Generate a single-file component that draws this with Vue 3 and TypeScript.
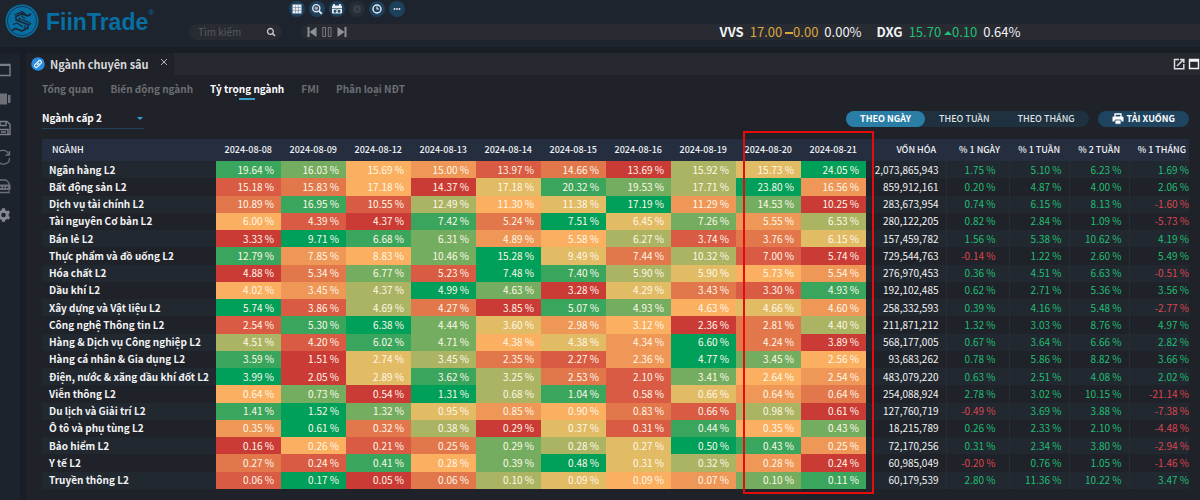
<script setup lang="ts">
import { ref } from 'vue'

interface Row {
  name: string
  weights: number[]
  cap: string
  changes: number[]
}

const dates = [
  '2024-08-08', '2024-08-09', '2024-08-12', '2024-08-13', '2024-08-14',
  '2024-08-15', '2024-08-16', '2024-08-19', '2024-08-20', '2024-08-21',
]

const rows: Row[] = [
  { name: 'Ngân hàng L2', weights: [19.64, 16.03, 15.69, 15.0, 13.97, 14.66, 13.69, 15.92, 15.73, 24.05], cap: '2,073,865,943', changes: [1.75, 5.1, 6.23, 1.69] },
  { name: 'Bất động sản L2', weights: [15.18, 15.83, 17.18, 14.37, 17.18, 20.32, 19.53, 17.71, 23.8, 16.56], cap: '859,912,161', changes: [0.2, 4.87, 4.0, 2.06] },
  { name: 'Dịch vụ tài chính L2', weights: [10.89, 16.95, 10.55, 12.49, 11.3, 11.38, 17.19, 11.29, 14.53, 10.25], cap: '283,673,954', changes: [0.74, 6.15, 8.13, -1.6] },
  { name: 'Tài nguyên Cơ bản L2', weights: [6.0, 4.39, 4.37, 7.42, 5.24, 7.51, 6.45, 7.26, 5.55, 6.53], cap: '280,122,205', changes: [0.82, 2.84, 1.09, -5.73] },
  { name: 'Bán lẻ L2', weights: [3.33, 9.71, 6.68, 6.31, 4.89, 5.58, 6.27, 3.74, 3.76, 6.15], cap: '157,459,782', changes: [1.56, 5.38, 10.62, 4.19] },
  { name: 'Thực phẩm và đồ uống L2', weights: [12.79, 7.85, 8.83, 10.46, 15.28, 9.49, 7.44, 10.32, 7.0, 5.74], cap: '729,544,763', changes: [-0.14, 1.22, 2.6, 5.49] },
  { name: 'Hóa chất L2', weights: [4.88, 5.34, 6.77, 5.23, 7.48, 7.4, 5.901, 5.9, 5.73, 5.54], cap: '276,970,453', changes: [0.36, 4.51, 6.63, -0.51] },
  { name: 'Dầu khí L2', weights: [4.02, 3.45, 4.37, 4.99, 4.63, 3.28, 4.29, 3.43, 3.3, 4.93], cap: '192,102,485', changes: [0.62, 2.71, 5.36, 3.56] },
  { name: 'Xây dựng và Vật liệu L2', weights: [5.74, 3.86, 4.69, 4.27, 3.85, 5.07, 4.93, 4.63, 4.66, 4.6], cap: '258,332,593', changes: [0.39, 4.16, 5.48, -2.77] },
  { name: 'Công nghệ Thông tin L2', weights: [2.54, 5.3, 6.38, 4.44, 3.6, 2.98, 3.12, 2.36, 2.81, 4.4], cap: '211,871,212', changes: [1.32, 3.03, 8.76, 4.97] },
  { name: 'Hàng & Dịch vụ Công nghiệp L2', weights: [4.51, 4.2, 6.02, 4.71, 4.38, 4.38, 4.34, 6.6, 4.24, 3.89], cap: '568,177,005', changes: [0.67, 3.64, 6.66, 2.82] },
  { name: 'Hàng cá nhân & Gia dụng L2', weights: [3.59, 1.51, 2.74, 3.45, 2.35, 2.27, 2.36, 4.77, 3.45, 2.56], cap: '93,683,262', changes: [0.78, 5.86, 8.82, 3.66] },
  { name: 'Điện, nước & xăng dầu khí đốt L2', weights: [3.99, 2.05, 2.89, 3.62, 3.25, 2.53, 2.1, 3.41, 2.64, 2.54], cap: '483,079,220', changes: [0.63, 2.51, 4.08, 2.02] },
  { name: 'Viễn thông L2', weights: [0.642, 0.73, 0.54, 1.31, 0.68, 1.04, 0.58, 0.66, 0.641, 0.64], cap: '254,088,924', changes: [2.78, 3.02, 10.15, -21.14] },
  { name: 'Du lịch và Giải trí L2', weights: [1.41, 1.52, 1.32, 0.95, 0.85, 0.9, 0.83, 0.66, 0.98, 0.61], cap: '127,760,719', changes: [-0.49, 3.69, 3.88, -7.38] },
  { name: 'Ô tô và phụ tùng L2', weights: [0.35, 0.61, 0.32, 0.38, 0.29, 0.37, 0.31, 0.44, 0.35, 0.43], cap: '18,215,789', changes: [0.26, 2.33, 2.1, -4.48] },
  { name: 'Bảo hiểm L2', weights: [0.16, 0.26, 0.21, 0.25, 0.29, 0.28, 0.27, 0.5, 0.43, 0.25], cap: '72,170,256', changes: [0.31, 2.34, 3.8, -2.94] },
  { name: 'Y tế L2', weights: [0.27, 0.241, 0.41, 0.281, 0.39, 0.48, 0.31, 0.32, 0.28, 0.24], cap: '60,985,049', changes: [-0.2, 0.76, 1.05, -1.46] },
  { name: 'Truyền thông L2', weights: [0.06, 0.17, 0.05, 0.06, 0.1, 0.091, 0.09, 0.07, 0.1, 0.11], cap: '60,179,539', changes: [2.8, 11.36, 10.22, 3.47] },
]

// Position of a value among its row, 0 (lowest) to 9 (highest); equal values keep date order.
function rank(weights: number[], index: number): number {
  const value = weights[index]
  return weights.filter((w, i) => w < value || (w === value && i < index)).length
}

const percent = (value: number): string => `${value.toFixed(2)} %`

const changeHeads = ['% 1 NGÀY', '% 1 TUẦN', '% 2 TUẦN', '% 1 THÁNG']
const tabs = ['Tổng quan', 'Biến động ngành', 'Tỷ trọng ngành', 'FMI', 'Phân loại NĐT']
const activeTab = ref('Tỷ trọng ngành')
const periods = ['THEO NGÀY', 'THEO TUẦN', 'THEO THÁNG']
const activePeriod = ref('THEO NGÀY')
const level = ref('2')
const query = ref('')
</script>

<template>
  <div class="app">
    <header class="top">
      <a class="brand" href="#" aria-label="FiinTrade">
        <svg class="mark" viewBox="0 0 34 34" aria-hidden="true">
          <circle cx="17" cy="17" r="16.5" fill="#086fa3" />
          <circle cx="17" cy="17" r="14.6" fill="none" stroke="#1b2c3d" stroke-width="0.8" />
          <g fill="none" stroke="#1b2531" stroke-linejoin="round">
            <path d="M26 10 22.500 12 17 9.500 11 12.500V16L23 20.500V24L17 27 10.500 24.500 7 26.500" stroke-width="1.500" />
            <path d="M22.500 12 17 7.500 9.500 11M14 13.500V17M14 14.500 24.500 18.500M20 21V25M8 20.500 12 19 18 23M17 9.500V12.500L20 14.500M24 21 26 19" stroke-width="1.100" />
          </g>
        </svg>
        <span class="wordmark">FiinTrade</span><span class="reg">®</span>
      </a>

      <div class="tools">
        <nav class="round-buttons" aria-label="Công cụ">
          <button type="button" aria-label="Bảng">
            <svg viewBox="0 0 16 16"><path d="M3.500 3.500h9v9h-9z" fill="#e9edf2" /><path d="M3.500 6.500h9M3.500 9.500h9M6.500 4.500v8M9.500 4.500v8" stroke="#6f859c" stroke-width=".6" /></svg>
          </button>
          <button type="button" aria-label="Tra cứu">
            <svg viewBox="0 0 16 16" fill="none" stroke="#e9edf2"><circle cx="7.300" cy="7.300" r="3.600" stroke-width="1.300" /><path d="m10 10 2.800 2.800" stroke-width="1.800" /><path d="M5.500 6.300h3.500M5.500 7.700h3.500M6.500 9h2" stroke-width=".8" /></svg>
          </button>
          <button type="button" aria-label="Lịch">
            <svg viewBox="0 0 16 16"><path d="M5 3v2M11 3v2" stroke="#e9edf2" stroke-width="1.800" /><rect x="3" y="4.500" width="10" height="8" rx="1" fill="#e9edf2" /><path d="M3 7.500h10M8 8v1M5 9.200h2v2H5zM9 9.200h2v2H9z" stroke="#254a67" stroke-width=".7" fill="#254a67" /></svg>
          </button>
          <button type="button" class="dim" aria-label="Thông báo">
            <svg viewBox="0 0 16 16"><circle cx="8" cy="8" r="4" fill="#3a4048" /><circle cx="8" cy="8" r="1.500" fill="#2b3139" /></svg>
          </button>
          <button type="button" aria-label="Lịch sử">
            <svg viewBox="0 0 16 16" fill="none" stroke="#e9edf2" stroke-width="1.400"><circle cx="8" cy="8" r="4" /><path d="M8 5.500V8h2" stroke-width="1.100" /></svg>
          </button>
          <button type="button" aria-label="Thêm">
            <svg viewBox="0 0 16 16" fill="#e9edf2"><circle cx="5.500" cy="8" r=".9" /><circle cx="8" cy="8" r=".9" /><circle cx="10.500" cy="8" r=".9" /></svg>
          </button>
        </nav>

        <div class="strip">
          <label class="search">
            <input v-model="query" type="text" placeholder="Tìm kiếm" aria-label="Tìm kiếm" />
            <svg viewBox="0 0 10 10" fill="none" stroke="#c9ccd1" aria-hidden="true"><circle cx="4.400" cy="4.400" r="2.900" stroke-width="1.300" /><path d="m6.500 6.500 2.500 2.500" stroke-width="1.600" /></svg>
          </label>
          <div class="ticker">
            <div class="player">
              <button type="button" aria-label="Lùi"><svg viewBox="0 0 10 10"><path d="M1.500 0v10" stroke="#8e9197" stroke-width="2" /><path d="M9.500 0v10L2.500 5z" fill="#8e9197" /></svg></button>
              <button type="button" aria-label="Tạm dừng"><svg viewBox="0 0 10 10" fill="none" stroke="#777a80"><path d="M.8.5h2.700v9H.8zM6.300.5H9v9H6.300z" /></svg></button>
              <button type="button" aria-label="Tiến"><svg viewBox="0 0 10 10"><path d="M8.500 0v10" stroke="#8e9197" stroke-width="2" /><path d="M.5 0v10L7.500 5z" fill="#8e9197" /></svg></button>
            </div>
            <div class="quotes">
              <div class="quote">
                <strong>VVS</strong>
                <span class="flat">17.00 <i class="dash"></i>0.00</span>
                <span>0.00%</span>
              </div>
              <div class="quote">
                <strong>DXG</strong>
                <span class="up">15.70 <i class="tri"></i>0.10</span>
                <span>0.64%</span>
              </div>
            </div>
          </div>
        </div>
      </div>
    </header>

    <div class="body">
      <aside class="rail">
        <button type="button" aria-label="Cửa sổ"><svg viewBox="0 0 16 16" fill="none" stroke="#7b7f85"><path d="M1 2.500h14v11H1z" stroke-width="1.400" /><path d="M1 3h14" stroke-width="2" /></svg></button>
        <button type="button" aria-label="Bố cục"><svg viewBox="0 0 16 16" fill="#6d7177"><path d="M4.500 2.500h7.500v11H4.500zM1 4h2.500v8H1zM13 4h2.500v8H13z" /></svg></button>
        <button type="button" aria-label="Lưu"><svg viewBox="0 0 16 16" fill="none" stroke="#7b7f85" stroke-width="1.400"><path d="M1.500 1.500h10.500l3 3v10H1.500z" /><path d="M5 1.500v4h6v-4M4 14.500V9.500h9v5M6 12h5" /></svg></button>
        <button type="button" aria-label="Làm mới"><svg viewBox="0 0 16 16" fill="none" stroke="#6d7177" stroke-width="1.300"><path d="M2 7a6 6 0 0 1 11.500-2M14.500 9A6 6 0 0 1 3 11.500M14.500 2v4h-4M1.500 14v-3.500H5" /></svg></button>
        <button type="button" aria-label="Xuất dữ liệu"><svg viewBox="0 0 16 16" fill="none" stroke="#6d7177" stroke-width="1.300"><path d="M2.500 6V2h8.500l3 3v2M2.500 12.500V14.500h11.500v-2" /><path d="M1 6.500h14.500v5.500H1z" fill="#6d7177" stroke="none" /><path d="M5 9.300h1.500M8 9.300h1.500M11 9.300h2" stroke="#1d232c" /></svg></button>
        <button type="button" aria-label="Cài đặt"><svg viewBox="0 0 16 16"><circle cx="8.500" cy="8" r="3.800" fill="none" stroke="#85888e" stroke-width="3" /><path d="M8.500 1.300v2M8.500 12.700v2M2.700 4.600l1.700 1M12.600 10.400l1.700 1M2.700 11.400l1.700-1M12.600 5.600l1.700-1" stroke="#85888e" stroke-width="3.200" /></svg></button>
      </aside>

      <main class="panel">
        <div class="tabbar">
          <div class="window-tab">
            <svg class="link" viewBox="0 0 14 14" aria-hidden="true"><circle cx="7" cy="7" r="6.800" fill="#2a8be0" /><g fill="none" stroke="#fff" stroke-width="1.100" transform="rotate(-45 7 7)"><rect x="2.800" y="5.300" width="8.400" height="3.400" rx="1.700" /><path d="M5.500 7h3" /></g></svg>
            <span>Ngành chuyên sâu</span>
            <button type="button" class="close" aria-label="Đóng"><svg viewBox="0 0 8 8" stroke="#b5b8bd"><path d="m1 1 6 6M7 1 1 7" /></svg></button>
          </div>
          <div class="window-actions">
            <button type="button" aria-label="Mở rộng"><svg viewBox="0 0 12 12" fill="none" stroke="#dadcdf" stroke-width="1.500"><path d="M6 1.500H1.500v9.300h9.300V6" /><path d="M4 8 10 2M7 1.500h3.800V5" /></svg></button>
            <button type="button" aria-label="Phóng to"><svg viewBox="0 0 12 12" fill="none" stroke="#f1f2f3"><path d="M1.500 1.500h9v9h-9z" stroke-width="1.400" /><path d="M1 2.500h10" stroke-width="2.500" /></svg></button>
          </div>
        </div>

        <section class="content">
          <nav class="tabs">
            <a v-for="t in tabs" :key="t" href="#" :class="{ active: t === activeTab }" @click.prevent="activeTab = t">{{ t }}</a>
          </nav>

          <div class="filters">
            <div class="level">
              <select v-model="level" aria-label="Ngành cấp">
                <option value="1">Ngành cấp 1</option>
                <option value="2">Ngành cấp 2</option>
                <option value="3">Ngành cấp 3</option>
              </select>
            </div>
            <div class="actions">
              <div class="periods" role="group" aria-label="Kỳ">
                <button v-for="p in periods" :key="p" type="button" :class="{ active: p === activePeriod }" @click="activePeriod = p">{{ p }}</button>
              </div>
              <button type="button" class="download">
                <svg viewBox="0 0 12 12" aria-hidden="true"><path d="M3 4V1h6v3" fill="none" stroke="#fff" stroke-width="1.300" /><path d="M.5 4.500q0-1 1-1h9q1 0 1 1v4H.5z" fill="#fff" /><path d="M3 7h6v4.200H3z" fill="#fff" stroke="#1f4460" stroke-width=".8" /></svg>
                TẢI XUỐNG
              </button>
            </div>
          </div>

          <div class="table-wrap">
            <table>
              <colgroup>
                <col class="c-name" />
                <col v-for="d in dates" :key="d" class="c-date" />
                <col class="c-cap" />
                <col class="c-day" />
                <col class="c-change" />
                <col class="c-change" />
                <col class="c-change" />
              </colgroup>
              <thead>
                <tr>
                  <th class="name">NGÀNH</th>
                  <th v-for="d in dates" :key="d" class="date">{{ d }}</th>
                  <th class="cap">VỐN HÓA</th>
                  <th v-for="h in changeHeads" :key="h" class="change">{{ h }}</th>
                </tr>
              </thead>
              <tbody>
                <tr v-for="r in rows" :key="r.name">
                  <th scope="row" class="name">{{ r.name }}</th>
                  <td v-for="(w, i) in r.weights" :key="i" :class="['weight', `heat-${rank(r.weights, i)}`]">{{ percent(w) }}</td>
                  <td class="cap">{{ r.cap }}</td>
                  <td v-for="(c, i) in r.changes" :key="i" :class="['change', c < 0 ? 'down' : 'up', { day: i === 0 }]">{{ percent(c) }}</td>
                </tr>
              </tbody>
            </table>
            <div class="highlight"></div>
          </div>
        </section>
      </main>
    </div>
  </div>
</template>

<style>
body {
  margin: 0;
  background: #1f2228;
}
</style>

<style scoped>
.app {
  display: flex;
  flex-direction: column;
  min-height: 100vh;
  overflow: hidden;
  background: #191d25;
  color: #f2f3f5;
  font-family: "Noto Sans CJK SC", "Noto Sans", sans-serif;
  font-size: 10px;
  line-height: 16px;
}
button {
  display: flex;
  align-items: center;
  justify-content: center;
  padding: 0;
  border: 0;
  background: none;
  color: inherit;
  font: inherit;
  cursor: pointer;
}
a {
  color: inherit;
  text-decoration: none;
}
svg {
  display: block;
  flex: none;
}

/* top bar */
.top {
  display: flex;
  height: 47px;
  background: #1e242d;
}
.brand {
  display: flex;
  width: 184px;
  padding: 4px 0 0 5px;
  box-sizing: border-box;
  color: #086fa3;
  font-family: "Liberation Sans", Arial, sans-serif;
}
.mark {
  width: 34px;
  height: 34px;
  margin-right: 7px;
}
.wordmark {
  font-size: 23px;
  font-weight: 700;
  line-height: 36px;
}
.reg {
  font-size: 8px;
  line-height: 18px;
}
.tools {
  display: flex;
  flex: 1;
  flex-direction: column;
  gap: 7px;
}
.round-buttons {
  display: flex;
  gap: 4px;
  padding: 1px 0 0 105px;
}
.round-buttons button {
  width: 16px;
  height: 16px;
  border-radius: 8px;
  background: #1d405c;
}
.round-buttons .dim {
  background: #272d35;
}
.round-buttons svg {
  width: 16px;
  height: 16px;
}
.strip {
  display: flex;
  gap: 19px;
  padding-left: 5px;
}
.search {
  display: flex;
  align-items: center;
  width: 93px;
  height: 16px;
  padding: 0 6px 0 9px;
  border-radius: 8px;
  box-sizing: border-box;
  background: #282b32;
}
.search input {
  flex: 1;
  min-width: 0;
  padding: 0;
  border: 0;
  outline: 0;
  background: none;
  color: #d0d3d8;
  font: inherit;
}
.search input::placeholder {
  color: #565a61;
}
.search svg {
  width: 10px;
  height: 10px;
}
.ticker {
  display: flex;
  flex: 1;
  align-items: center;
  height: 16px;
  border-radius: 8px 0 0 8px;
  background: #282b32;
}
.player {
  display: flex;
  gap: 5px;
  padding-left: 6px;
}
.player svg {
  width: 10px;
  height: 10px;
}
.quotes {
  display: flex;
  gap: 15px;
  margin: 0 auto;
  padding-left: 193px;
  font-size: 13px;
}
.quote {
  display: flex;
  gap: 6px;
  white-space: nowrap;
}
.flat {
  color: #dba63c;
}
.up {
  color: #1fbf75;
}
.down {
  color: #dd4450;
}
.dash {
  display: inline-block;
  width: 8px;
  height: 2px;
  margin-bottom: 3px;
  background: #dba63c;
}
.tri {
  display: inline-block;
  margin-bottom: 2px;
  border: 4px solid transparent;
  border-top: 0;
  border-bottom-color: #1fbf75;
}

/* body */
.body {
  display: flex;
  flex: 1;
  gap: 6px;
  padding-top: 6px;
}
.rail {
  display: flex;
  flex-direction: column;
  align-items: flex-end;
  gap: 13px;
  width: 20px;
  padding: 9px 9px 0 0;
  box-sizing: border-box;
  overflow: hidden;
  background: #1d232c;
}
.rail svg {
  width: 16px;
  height: 16px;
}
.panel {
  display: flex;
  flex: 1;
  flex-direction: column;
  min-width: 0;
  background: #1f2228;
}
.tabbar {
  display: flex;
  justify-content: space-between;
  height: 22px;
  background: #26282f;
}
.window-tab {
  display: flex;
  align-items: center;
  gap: 5px;
  padding: 0 6px 0 5px;
  background: #1f2228;
  color: #d6d8db;
  font-size: 11px;
  font-weight: 700;
}
.link {
  width: 14px;
  height: 14px;
}
.close {
  align-self: flex-start;
  padding: 5px 0 0 6px;
}
.close svg {
  width: 8px;
  height: 8px;
}
.window-actions {
  display: flex;
  gap: 3px;
}
.window-actions svg {
  width: 12px;
  height: 12px;
}
.content {
  display: flex;
  flex: 1;
  flex-direction: column;
  padding: 6px 11px 11px 16px;
}
.tabs {
  display: flex;
  gap: 17px;
  color: #6b6e73;
  font-size: 10px;
  font-weight: 700;
}
.tabs a {
  display: flex;
  flex-direction: column;
  align-items: center;
  height: 19px;
}
.tabs .active {
  color: #fff;
}
.tabs .active::after {
  width: 16px;
  height: 2px;
  margin-top: 1px;
  background: #3a9fd0;
  content: "";
}
.filters {
  display: flex;
  align-items: center;
  justify-content: space-between;
  height: 36px;
  margin-bottom: 3px;
}
.level {
  position: relative;
  width: 102px;
  border-bottom: 1px solid #24415a;
}
.level::after {
  position: absolute;
  top: 9px;
  right: 1px;
  border: 3px solid transparent;
  border-top-color: #35a5d8;
  border-bottom: 0;
  content: "";
}
.level select {
  width: 100%;
  height: 20px;
  padding: 0;
  border: 0;
  outline: 0;
  appearance: none;
  background: none;
  color: #fff;
  font: inherit;
  font-weight: 700;
}
.actions {
  display: flex;
  gap: 9px;
  padding-top: 2px;
  font-size: 9px;
}
.periods {
  display: flex;
  border-radius: 8px;
  background: #1f303e;
}
.periods button {
  height: 16px;
  padding: 0 14px;
  border-radius: 8px;
  color: #dfe3e7;
  font-weight: 500;
}
.periods .active {
  background: #2a7ea6;
  color: #fff;
  font-weight: 700;
}
.download {
  gap: 3px;
  height: 16px;
  padding: 0 14px;
  border-radius: 8px;
  background: #1f4460;
  color: #fff;
  font-weight: 700;
}
.download svg {
  width: 12px;
  height: 12px;
}

/* table */
.table-wrap {
  position: relative;
  display: flex;
  flex: 1;
}
table {
  width: 100%;
  border-collapse: collapse;
  table-layout: fixed;
}
.c-name {
  width: 174px;
}
.c-date {
  width: 65px;
}
.c-cap {
  width: 80px;
}
.c-day {
  width: 63px;
}
.c-change {
  width: 60px;
}
th,
td {
  padding: 0;
  text-align: right;
  white-space: nowrap;
}
thead tr {
  height: 22px;
  background: #252e3f;
}
thead th {
  font-size: 9px;
  font-weight: 500;
}
thead .name {
  padding-left: 10px;
}
.name {
  padding-left: 7px;
  text-align: left;
}
thead .date {
  padding-right: 9px;
}
thead .cap {
  padding-right: 10px;
}
thead .change {
  padding-right: 9px;
}
thead .change:last-child {
  padding-right: 3px;
}
tbody tr:nth-child(odd) {
  background: #22282f;
}
.weight {
  padding-right: 7px;
  color: #fff8e8;
}
tbody .cap {
  padding-right: 7px;
}
tbody .change {
  padding-right: 7px;
  border-left: 1px solid #282c33;
}
tbody .day {
  padding-right: 13px;
}
tbody .change:last-child {
  padding-right: 0;
}
.heat-0 { background: #cb3b36; }
.heat-1 { background: #d95b43; }
.heat-2 { background: #e2774c; }
.heat-3 { background: #ee9757; }
.heat-4 { background: #fab060; }
.heat-5 { background: #e2bb65; }
.heat-6 { background: #abb462; }
.heat-7 { background: #74ad5f; }
.heat-8 { background: #3aa65d; }
.heat-9 { background: #009f5a; }
.highlight {
  position: absolute;
  top: -8px;
  right: calc(100% * 315 / 1147);
  bottom: -5px;
  left: calc(100% * 701 / 1147);
  border: 2px solid #e60c0c;
  pointer-events: none;
}
</style>
